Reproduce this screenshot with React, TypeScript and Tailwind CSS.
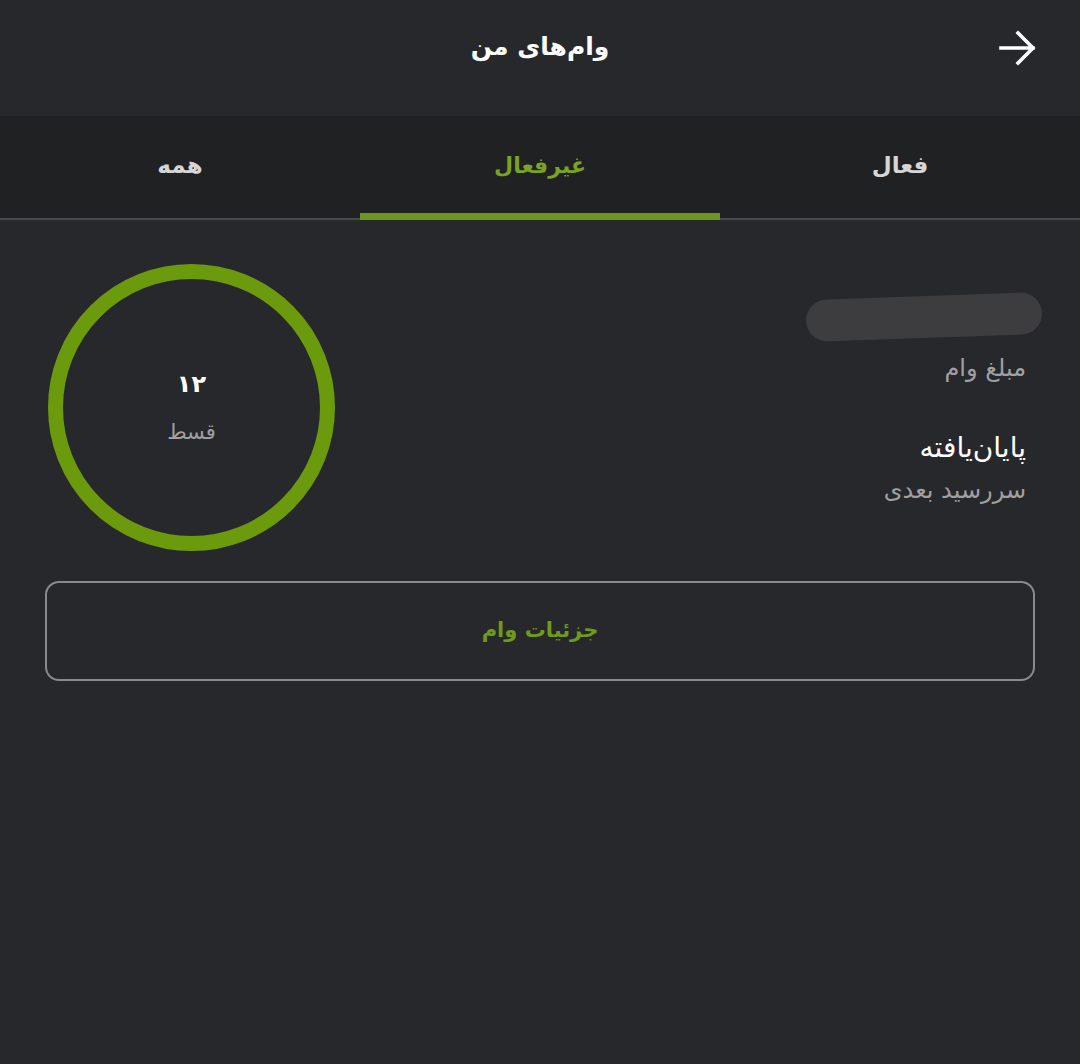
import React from "react";

export default function App() {
  const font = { fontFamily: '"DejaVu Sans", "Noto Sans", sans-serif' };
  return (
    <div dir="rtl" style={font} className="w-[1080px] h-[1064px] bg-[#27282c] flex flex-col">
      <div className="h-[116px] flex items-center justify-center relative shrink-0 pb-[22px]">
        <span className="text-[25px] font-bold text-white">وام‌های من</span>
        <svg
          className="absolute right-[42px] top-[28px]"
          width="40"
          height="40"
          viewBox="0 0 40 40"
          fill="none"
          stroke="white"
          strokeWidth="3.6"
          strokeLinecap="square"
        >
          <path d="M3 20h32M20 5l15 15-15 15" />
        </svg>
      </div>
      <div className="h-[104px] bg-[#202123] flex border-b-2 border-[#4a4b4e] shrink-0">
        <div className="flex-1 flex items-center justify-center pb-[4px]">
          <span className="text-[23px] font-bold text-[#d6d6d6]">فعال</span>
        </div>
        <div className="flex-1 flex items-center justify-center relative pb-[4px]">
          <span className="text-[22px] font-bold text-[#7aa321]">غیرفعال</span>
          <div className="absolute left-0 right-0 bottom-[-2px] h-[7px] bg-[#6e9520]" />
        </div>
        <div className="flex-1 flex items-center justify-center pb-[4px]">
          <span className="text-[23px] font-bold text-[#d6d6d6]">همه</span>
        </div>
      </div>
      <div className="flex justify-between items-start pr-[54px] pl-[48px] pt-[44px]">
        <div className="flex flex-col items-start pt-[32px]">
          <div className="w-[236px] h-[42px] mr-[-16px] rounded-full bg-[#3d3d3f] rotate-[-2deg]" />
          <span className="mt-[12px] text-[24px] leading-[36px] text-[#a0a0a2]">مبلغ وام</span>
          <span className="mt-[42px] text-[28px] leading-[40px] text-white">پایان‌یافته</span>
          <span className="mt-[4px] text-[24px] leading-[36px] text-[#a0a0a2]">سررسید بعدی</span>
        </div>
        <div className="w-[287px] h-[287px] rounded-full border-[15px] border-[#6b9a0d] flex flex-col items-center justify-center">
          <span className="text-[24px] font-bold text-white">۱۲</span>
          <span className="text-[21px] text-[#a0a0a2] mt-[15px]">قسط</span>
        </div>
      </div>
      <div className="px-[45px] mt-[30px]">
        <div className="h-[100px] rounded-[14px] border-2 border-[#8a8a8c] flex items-center justify-center">
          <span className="text-[21px] font-bold text-[#6f9a1a]">جزئیات وام</span>
        </div>
      </div>
    </div>
  );
}
